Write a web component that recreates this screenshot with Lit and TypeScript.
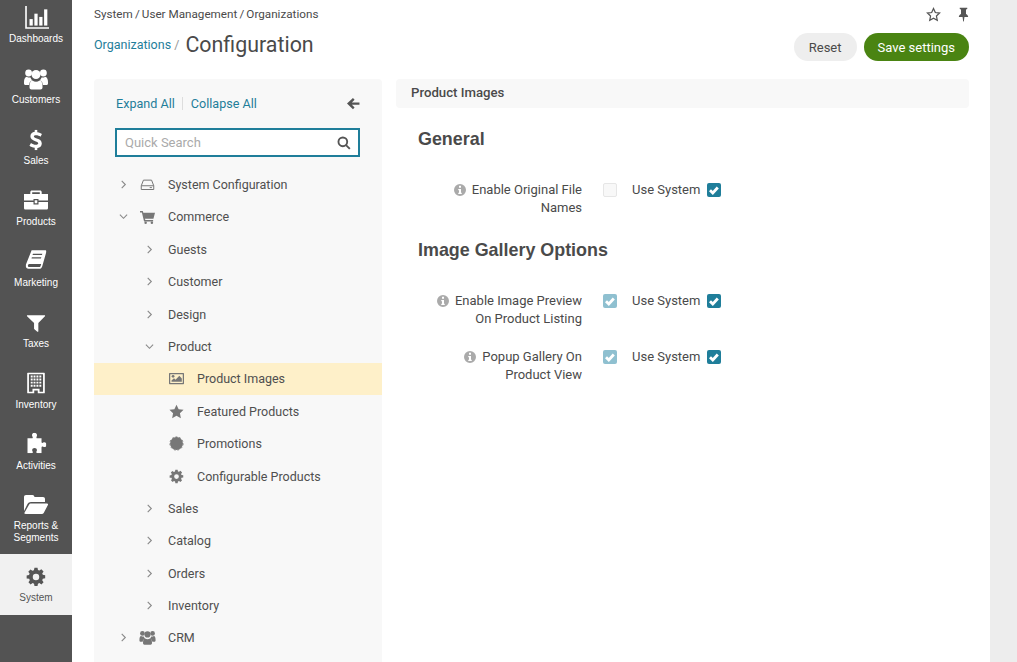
import { LitElement, html, css, svg } from 'lit'
import { customElement } from 'lit/decorators.js'

const gear = 'M10.2 1h3.6l.5 2.8 1.7.7 2.3-1.6 2.6 2.6-1.6 2.3.7 1.7 2.8.5v3.6l-2.8.5-.7 1.7 1.6 2.3-2.6 2.6-2.3-1.6-1.7.7-.5 2.8h-3.6l-.5-2.8-1.7-.7-2.3 1.6-2.6-2.6 1.6-2.3-.7-1.7L1 13.8v-3.6l2.8-.5.7-1.7-1.6-2.3 2.6-2.6 2.3 1.600 1.7-.7zM12 8.200a3.800 3.800 0 1 0 0 7.600 3.800 3.800 0 0 0 0-7.600z'

const icons: Record<string, unknown> = {
  chart: svg`<path d="M2 1h1.500v19.500H25V22H2z"/><rect x="6" y="13" width="3" height="6"/><rect x="10.500" y="8" width="3" height="11"/><rect x="15" y="11" width="3" height="8"/><rect x="19.500" y="4" width="3" height="15"/>`,
  users: svg`<circle cx="4.600" cy="6" r="3.400"/><circle cx="19.400" cy="6" r="3.400"/><circle cx="12" cy="7.500" r="4.500"/><path d="M0 15c0-3 1-5 2.800-5.300C4 10.500 5 10.800 6.500 10.500c.3 1.200 1 2.200 1.700 2.800-1.900.8-3 2.600-3.200 4.700H1.500C.6 18 0 17.300 0 16.500zM24 15c0-3-1-5-2.800-5.300-1.200.8-2.200 1.100-3.700.8-.3 1.200-1 2.200-1.700 2.800 1.900.8 3 2.600 3.200 4.700h3.500c.9 0 1.500-.7 1.500-1.500zM8.500 13.500c1 .8 2.200 1.200 3.500 1.200s2.500-.4 3.500-1.200c2 .3 3 2.300 3 5.500v1.500c0 1.200-.8 2-2 2h-9c-1.200 0-2-.8-2-2V19c0-3.200 1-5.200 3-5.500z"/>`,
  dollar: svg`<path d="M10.500 0h3v3c2.500.3 4.300 1.100 5.500 2l-1.700 3.200c-1.500-1-3.300-1.700-5.200-1.700-1.700 0-2.600.6-2.600 1.500 0 1 1.100 1.500 3.400 2.300 3.800 1.200 5.900 2.700 5.900 5.900 0 3-2.100 5-5.300 5.500V24h-3v-2.800c-2.600-.3-4.800-1.200-6.200-2.400l1.800-3.200c1.700 1.300 3.700 2.100 5.700 2.100 1.800 0 2.800-.7 2.800-1.800 0-1.100-1-1.700-3.500-2.500-3.500-1.100-5.700-2.600-5.700-5.700 0-2.800 2-4.800 5.100-5.300z"/>`,
  case: svg`<path d="M8 2.500h8c1 0 1.700.7 1.700 1.700V6H24v6.500H14.500v-1.500h-5v1.500H0V6h6.300V4.200c0-1 .7-1.700 1.700-1.700zm.2 1.800V6h7.600V4.300zM0 14h9.500v2.500h5V14H24v6c0 1-.7 1.500-1.500 1.500h-21C.7 21.500 0 21 0 20zm10.700-1.800h2.600v3h-2.600z"/>`,
  book: svg`<path d="M7 1h15.500c1 0 1.500 1 1.200 2l-4.600 16c-.5 1.700-1.600 3-3.800 3H3.500C1.500 22 0 20.500.4 18.200c0-.6.200-1.200.5-1.800zm1.500 4-.4 1.400h10.700l.4-1.400zm-1.200 4-.4 1.400h10.700l.4-1.400zM4.300 16.500c-.8 0-1.500 1-1.500 2 0 .9.600 1.500 1.500 1.500h11.500c.6 0 1-.3 1.300-1l.8-2.500z"/>`,
  filter: svg`<path d="M1 2h22c.7 0 1 .8.500 1.300L15 12v10.500c0 .7-.8 1-1.300.6l-3.700-3c-.3-.2-.5-.5-.5-.9V12L.5 3.300C0 2.800.3 2 1 2z"/>`,
  building: svg`<path fill-rule="evenodd" d="M3 0h18c.6 0 1 .4 1 1v22c0 .6-.4 1-1 1H14v-3.500h-4V24H3c-.6 0-1-.4-1-1V1c0-.6.4-1 1-1zm1 2v20h4v-3.500h8V22h4V2z"/><path d="M6 3.500h2.200v2.200H6zM9.200 3.500h2.200v2.200H9.200zM12.500 3.500h2.200v2.200h-2.200zM15.800 3.500H18v2.200h-2.200zM6 7h2.200v2.200H6zM9.200 7h2.200v2.200H9.200zM12.500 7h2.200v2.200h-2.200zM15.800 7H18v2.200h-2.200zM6 10.500h2.200v2.200H6zM9.200 10.500h2.200v2.200H9.200zM12.500 10.500h2.200v2.200h-2.200zM15.800 10.500H18v2.200h-2.200zM6 14h2.200v2.200H6zM9.200 14h2.200v2.200H9.200zM12.500 14h2.200v2.200h-2.200zM15.800 14H18v2.200h-2.200z"/>`,
  puzzle: svg`<path d="M10 0c2 0 3.200 1.300 3.200 2.800 0 1-.7 1.700-.7 2.600 0 .7.500 1.100 1.700 1.100h4.300v4.300c0 .8.400 1.200 1 1.200.9 0 1.300-.8 2.300-.8 1.600 0 2.700 1.200 2.700 2.800s-1.100 2.800-2.700 2.800c-1 0-1.400-.8-2.300-.8-.6 0-1 .4-1 1.200V24h-4.800c-.9 0-1.400-.5-1.400-1.100 0-.9.800-1.400.8-2.400 0-1.500-1.200-2.500-2.800-2.500s-2.800 1-2.800 2.500c0 1 .8 1.500.8 2.400 0 .6-.5 1.100-1.400 1.100H2V6.500h4.500c1.200 0 1.700-.4 1.700-1.100 0-.9-.9-1.600-.9-2.600C7.300 1.300 8.300 0 10 0z"/>`,
  folder: svg`<path d="M2 2h6.500c1 0 1.800.8 2 2h8.500c1.200 0 2 .8 2 2v3H7c-1.500 0-2.800.8-3.500 2L0 18V4c0-1.200.8-2 2-2zM7 10.500h16c.9 0 1.300.8.900 1.500l-4.200 8c-.4.700-1 1-1.800 1H1.500c-.9 0-1.300-.8-.9-1.500l4.400-7.800c.4-.7 1.200-1.200 2-1.200z"/>`,
  gear: svg`<path fill-rule="evenodd" d="${gear}"/>`,
  drive: svg`<path fill="none" stroke="currentColor" stroke-width="1.600" d="M2 14l3.500-9h13l3.500 9v6H2zM2 14h20"/><rect x="15.500" y="16.200" width="3.500" height="1.500"/>`,
  cart: svg`<path d="M0 3h4.500l.8 3H24l-2.500 9.500H8l.5 2H21v2.500H6.500L3 5.500H0z"/><circle cx="9" cy="22" r="2"/><circle cx="19" cy="22" r="2"/>`,
  image: svg`<path fill-rule="evenodd" d="M1 3h22c.6 0 1 .4 1 1v16c0 .6-.4 1-1 1H1c-.6 0-1-.4-1-1V4c0-.6.4-1 1-1zm1 2v14h20V5z"/><circle cx="6.500" cy="8.500" r="2.200"/><path d="M4 17v-2l4-3.500 2.500 2.500 6-6.500 4 4.500V17z"/>`,
  star: svg`<path d="M12 1l3.400 7.300 7.900 1-5.800 5.500 1.500 7.900-7-3.900-7 3.900 1.500-7.900L.7 9.300l7.900-1z"/>`,
  burst: svg`<circle cx="12" cy="12" r="10.300"/><circle cx="12" cy="12" r="10.600" fill="none" stroke="currentColor" stroke-width="1.500" stroke-dasharray="3 3"/>`,
  pin: svg`<path d="M6 1h12v2l-2 1v7c2 1 3.500 3 3.500 5h-6l-1 7h-1l-1-7h-6c0-2 1.500-4 3.500-5V4L6 3z"/>`,
}

const ico = (name: string) => html`<svg class="i-${name}" viewBox="0 0 24 24" fill="currentColor">${icons[name]}</svg>`

const navItems = [
  ['chart', 'Dashboards'], ['users', 'Customers'], ['dollar', 'Sales'], ['case', 'Products'], ['book', 'Marketing'],
  ['filter', 'Taxes'], ['building', 'Inventory'], ['puzzle', 'Activities'], ['folder', 'Reports & Segments'], ['gear', 'System'],
]

// level, caret (r / d / ''), icon, label, selected
const treeRows: [number, string, string, string, boolean?][] = [
  [0, 'r', 'drive', 'System Configuration'],
  [0, 'd', 'cart', 'Commerce'],
  [1, 'r', '', 'Guests'],
  [1, 'r', '', 'Customer'],
  [1, 'r', '', 'Design'],
  [1, 'd', '', 'Product'],
  [2, '', 'image', 'Product Images', true],
  [2, '', 'star', 'Featured Products'],
  [2, '', 'burst', 'Promotions'],
  [2, '', 'gear', 'Configurable Products'],
  [1, 'r', '', 'Sales'],
  [1, 'r', '', 'Catalog'],
  [1, 'r', '', 'Orders'],
  [1, 'r', '', 'Inventory'],
  [0, 'r', 'users', 'CRM'],
]

@customElement('app-root')
export class AppRoot extends LitElement {
  static styles = css`
    :host {
      display: flex;
      width: 1017px;
      height: 662px;
      overflow: hidden;
      background: #fff;
      font-family: Roboto, sans-serif;
      font-size: 14px;
      color: #4a4a4a;
    }
    svg { display: block; }
    .nav {
      width: 72px;
      flex: none;
      background: #535353;
      margin-top: -5px;
      color: #fff;
    }
    .nav-item {
      display: flex;
      flex-direction: column;
      align-items: center;
      height: 61px;
      padding-top: 11px;
      box-sizing: border-box;
      font: 10px/12px 'Liberation Sans', Arial, sans-serif;
      text-align: center;
    }
    .nav-item.tall { height: 71px; }
    .nav-item.on { background: #f1f1f1; color: #555; }
    .nav-item svg { width: 24px; height: 24px; margin-bottom: 3px; }
    .nav-item.tall svg { margin-bottom: 2px; }
    .nav-item .i-chart { transform: scale(1.08); }
    .nav-item .i-dollar { transform: scale(.85); }
    .nav-item .i-case { transform: translateY(-1px); }
    .nav-item .i-book { transform: translateY(-2px) scale(.88); }
    .nav-item .i-filter { transform: scale(.78); }
    .nav-item .i-building { transform: translateY(-1px) scale(.88); }
    .nav-item .i-puzzle { transform: translateY(-2px) scale(.85); }
    .nav-item .i-folder { transform: translateY(-1px); }
    .nav-item .i-gear { transform: scale(.85); }
    .main {
      width: 875px;
      flex: none;
      padding: 0 21px 0 22px;
      box-sizing: content-box;
    }
    .gutter { flex: 1; background: #ededed; }
    .crumbs {
      display: flex;
      justify-content: space-between;
      align-items: center;
      height: 28px;
      font-size: 11.7px;
    }
    .crumbs i { font-style: normal; margin: 0 2.1px; }
    .tools { display: flex; gap: 15px; margin-right: -2px; color: #555; }
    .tools svg { width: 15px; height: 15px; }
    .title-row {
      display: flex;
      justify-content: space-between;
      align-items: center;
      height: 34px;
      margin-bottom: 17px;
    }
    .title { display: flex; align-items: center; margin-top: -2px; }
    .title a { color: #1f7e9a; font-size: 12.5px; margin-right: 6px; }
    .title a span { color: #999; }
    h1 { margin: 0; font-size: 21.4px; font-weight: 400; color: #4a4a4a; }
    .btns { display: flex; gap: 7px; margin-top: 4px; }
    button {
      height: 28px;
      border: 0;
      border-radius: 14px;
      font: 13px Roboto, sans-serif;
      padding: 0 15px;
      background: #eee;
      color: #4a4a4a;
    }
    button.save { background: #4a8412; color: #fff; padding: 0 14px; }
    .cols { display: flex; gap: 14px; }
    .tree {
      width: 288px;
      height: 583px;
      flex: none;
      background: #f8f8f8;
      border-radius: 4px 4px 0 0;
      box-sizing: border-box;
      padding-top: 16px;
    }
    .tree-top {
      display: flex;
      align-items: center;
      height: 17px;
      padding: 0 22px 0 22px;
      color: #1f7e9a;
      font-size: 12.6px;
    }
    .tree-top .sep { width: 1px; height: 13px; background: #ddd; margin: 0 8px 0 7px; }
    .tree-top svg { margin-left: auto; width: 13px; height: 13px; color: #555; }
    .search {
      display: flex;
      align-items: center;
      justify-content: space-between;
      width: 245px;
      height: 29px;
      margin: 16px 0 11.3px 21px;
      box-sizing: border-box;
      border: 2px solid #1f7e9a;
      background: #fff;
      padding: 0 7px 0 8px;
      font-size: 13px;
      color: #aaa;
    }
    .search svg { width: 14px; height: 14px; color: #555; }
    .row {
      display: flex;
      align-items: center;
      height: 32.4px;
      font-size: 12.5px;
      color: #4f4f4f;
      position: relative;
    }
    .row.sel { background: #fef0c9; }
    .caret {
      width: 9px;
      height: 9px;
      flex: none;
      fill: none;
      stroke: #888;
      stroke-width: 1.2;
    }
    .row svg:not(.caret) { width: 15px; height: 15px; flex: none; color: #777; }
    .lv0 .caret { margin-left: 25px; }
    .lv0 svg:not(.caret) { margin-left: 12px; margin-right: 13px; }
    .row .i-users { transform: scale(1.1); }
    .lv1 .caret { margin-left: 51px; margin-right: 14px; }
    .lv2 svg:not(.caret) { margin-left: 75px; margin-right: 13px; }
    .form { flex: 1; }
    .bar {
      height: 29px;
      line-height: 27px;
      background: #f8f8f8;
      border-radius: 4px;
      padding-left: 15px;
      font-size: 13.2px;
      font-weight: 500;
    }
    h2 {
      margin: 0;
      padding-left: 22px;
      font: bold 17.9px/22px 'Liberation Sans', Arial, sans-serif;
      color: #4a4a4a;
    }
    h2.g1 { margin-top: 20px; margin-bottom: 31px; }
    h2.g2 { margin-top: 2px; margin-bottom: 31px; }
    .field { display: flex; height: 56px; align-items: flex-start; line-height: 18px; font-size: 13px; }
    .lbl {
      width: 186px;
      text-align: right;
      display: flex;
      justify-content: flex-end;
      gap: 6px;
    }
    .lbl svg { width: 12px; height: 12px; margin-top: 3px; color: #aaa; flex: none; }
    .lbl span { display: block; }
    .check {
      width: 14px;
      height: 14px;
      border-radius: 2px;
      margin-top: 2px;
      box-sizing: border-box;
      flex: none;
    }
    .check.a { background: #1f7e9a; }
    .check.b { background: #8fc0d0; }
    .check.c { background: #f8f8f8; border: 1px solid #e6e6e6; }
    .check svg { width: 14px; height: 14px; fill: none; stroke: #fff; stroke-width: 2.8; }
    .cb1 { margin-left: 21px; }
    .use { margin-left: 15px; margin-right: 7px; }
  `

  field (lines: string[], state: string) {
    return html`
      <div class="field">
        <div class="lbl">
          <svg viewBox="0 0 24 24" fill="currentColor"><path fill-rule="evenodd" d="M12 0a12 12 0 1 1 0 24 12 12 0 0 1 0-24zM10 3.500v4h4v-4zM8.500 10v2.500H10v5H8.500V20h7v-2.500H14V10z"/></svg>
          <span>${lines[0]}<br>${lines[1]}</span>
        </div>
        ${this.check(state, 'cb1')}
        <span class="use">Use System</span>
        ${this.check('a', '')}
      </div>
    `
  }

  check (state: string, extra: string) {
    return html`<div class="check ${state} ${extra}">
      ${state === 'c' ? '' : html`<svg viewBox="0 0 14 14"><path d="M3 7.200l2.800 2.800 5-5.500"/></svg>`}
    </div>`
  }

  render () {
    return html`
      <div class="nav">
        ${navItems.map(([icon, label]) => html`
          <div class="nav-item ${icon === 'folder' ? 'tall' : ''} ${icon === 'gear' ? 'on' : ''}">
            ${ico(icon)}<span>${label}</span>
          </div>
        `)}
      </div>
      <div class="main">
        <div class="crumbs">
          <span>System<i>/</i>User Management<i>/</i>Organizations</span>
          <div class="tools">
            <svg viewBox="0 0 24 24" fill="none" stroke="currentColor" stroke-width="2"><path d="M12 2.500l2.900 6.300 6.800.9-5 4.700 1.300 6.800-6-3.400-6 3.400 1.300-6.800-5-4.700 6.800-.9z"/></svg>
            ${ico('pin')}
          </div>
        </div>
        <div class="title-row">
          <div class="title"><a>Organizations <span>/</span></a><h1>Configuration</h1></div>
          <div class="btns"><button>Reset</button><button class="save">Save settings</button></div>
        </div>
        <div class="cols">
          <div class="tree">
            <div class="tree-top">
              <span>Expand All</span><i class="sep"></i><span>Collapse All</span>
              <svg viewBox="0 0 24 24" fill="currentColor"><path d="M11 2l3 3-5 5h14v4.500H9l5 5-3 3-11-10.300z"/></svg>
            </div>
            <div class="search">
              <span>Quick Search</span>
              <svg viewBox="0 0 24 24" fill="none" stroke="currentColor" stroke-width="3.200"><circle cx="10" cy="10" r="7.500"/><path d="M15.500 15.500L22 22"/></svg>
            </div>
            ${treeRows.map(([level, caret, icon, label, sel]) => html`
              <div class="row lv${level} ${sel ? 'sel' : ''}">
                ${caret ? html`<svg class="caret" viewBox="0 0 10 10"><path d="${caret === 'r' ? 'M3 1l4 4-4 4' : 'M1 3l4 4 4-4'}"/></svg>` : ''}
                ${icon ? ico(icon) : ''}
                <span>${label}</span>
              </div>
            `)}
          </div>
          <div class="form">
            <div class="bar">Product Images</div>
            <h2 class="g1">General</h2>
            ${this.field(['Enable Original File', 'Names'], 'c')}
            <h2 class="g2">Image Gallery Options</h2>
            ${this.field(['Enable Image Preview', 'On Product Listing'], 'b')}
            ${this.field(['Popup Gallery On', 'Product View'], 'b')}
          </div>
        </div>
      </div>
      <div class="gutter"></div>
    `
  }
}
